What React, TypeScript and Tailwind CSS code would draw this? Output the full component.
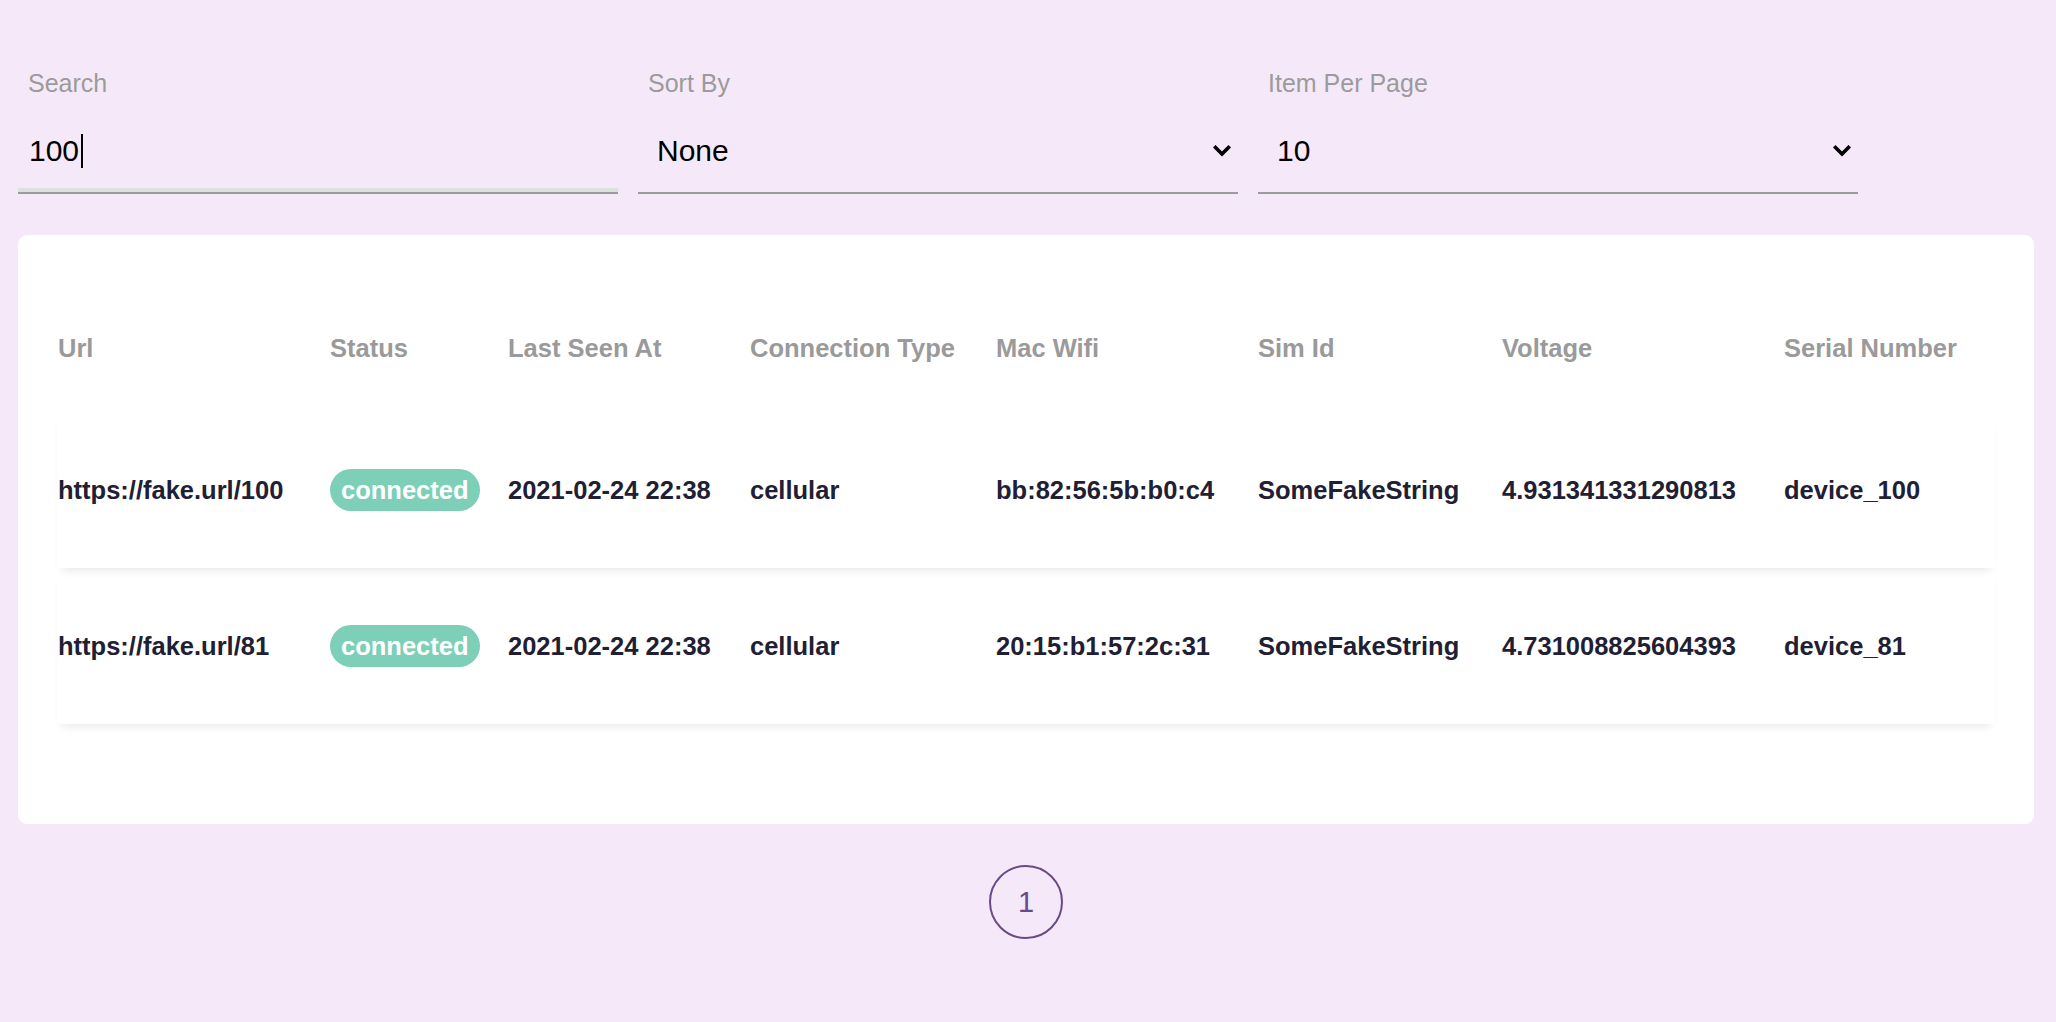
import React from "react";

const cols = "grid grid-cols-[272px_178px_242px_246px_262px_244px_282px_1fr] items-center pl-[1px]";

const headers = ["Url", "Status", "Last Seen At", "Connection Type", "Mac Wifi", "Sim Id", "Voltage", "Serial Number"];

const rows = [
  {
    url: "https://fake.url/100",
    seen: "2021-02-24 22:38",
    conn: "cellular",
    mac: "bb:82:56:5b:b0:c4",
    sim: "SomeFakeString",
    volt: "4.931341331290813",
    serial: "device_100",
  },
  {
    url: "https://fake.url/81",
    seen: "2021-02-24 22:38",
    conn: "cellular",
    mac: "20:15:b1:57:2c:31",
    sim: "SomeFakeString",
    volt: "4.731008825604393",
    serial: "device_81",
  },
];

function Chevron() {
  return (
    <svg width="18" height="12" viewBox="0 0 18 12" fill="none">
      <polyline points="2.5,2.5 9,9 15.5,2.5" stroke="#000" strokeWidth="3.6" strokeLinecap="square" strokeLinejoin="miter" />
    </svg>
  );
}

function SelectField({ label, value }: { label: string; value: string }) {
  return (
    <div className="w-[600px] flex flex-col">
      <div className="h-[30px] leading-[30px] pl-[10px] text-[25px] text-[#9b9b9b]">{label}</div>
      <div className="mt-[12px] h-[84px] border-b-2 border-[#9b9b9b] flex items-center justify-between pl-[19px] pr-[7px]">
        <span className="text-[30px] text-black leading-none">{value}</span>
        <Chevron />
      </div>
    </div>
  );
}

export default function App() {
  return (
    <div
      className="min-h-[1022px] w-full bg-[#f5e9f9] pl-[18px] pr-[22px] pt-[68px] pb-[40px]"
      style={{ fontFamily: '"Liberation Sans", Arial, sans-serif' }}
    >
      <div className="flex gap-[20px]">
        <div className="w-[600px] flex flex-col">
          <div className="h-[30px] leading-[30px] pl-[10px] text-[25px] text-[#9b9b9b]">Search</div>
          <div className="mt-[12px] h-[84px] border-b-2 border-[#9b9b9b] shadow-[inset_0_-4px_0_#dbe2de] flex items-center pl-[11px]">
            <span className="text-[30px] text-black leading-none">100</span>
            <span className="inline-block w-[2px] h-[34px] bg-black ml-[2px]" />
          </div>
        </div>
        <SelectField label="Sort By" value="None" />
        <SelectField label="Item Per Page" value="10" />
      </div>

      <div className="mt-[41px] bg-white rounded-[9px] px-[39px] pt-[89px] pb-[100px]">
        <div className={`${cols} h-[48px] text-[25.5px] font-bold text-[#9a9a9a]`}>
          {headers.map((h) => (
            <div key={h} className="whitespace-nowrap">{h}</div>
          ))}
        </div>
        <div className="mt-[40px] flex flex-col">
          {rows.map((r) => (
            <div
              key={r.url}
              className={`${cols} h-[156px] text-[25.5px] font-bold text-[#1f2033] shadow-[0_7px_9px_-5px_rgba(0,0,0,0.10)]`}
            >
              <div className="whitespace-nowrap">{r.url}</div>
              <div>
                <span className="inline-flex items-center h-[42px] px-[11px] rounded-full bg-[#7dcfb7] text-white">
                  connected
                </span>
              </div>
              <div className="whitespace-nowrap">{r.seen}</div>
              <div className="whitespace-nowrap">{r.conn}</div>
              <div className="whitespace-nowrap">{r.mac}</div>
              <div className="whitespace-nowrap">{r.sim}</div>
              <div className="whitespace-nowrap">{r.volt}</div>
              <div className="whitespace-nowrap">{r.serial}</div>
            </div>
          ))}
        </div>
      </div>

      <div className="mt-[41px] flex justify-center">
        <button className="w-[74px] h-[74px] rounded-full border-2 border-[#6a4a86] flex items-center justify-center text-[29px] text-[#6a4a86] leading-none">
          1
        </button>
      </div>
    </div>
  );
}
